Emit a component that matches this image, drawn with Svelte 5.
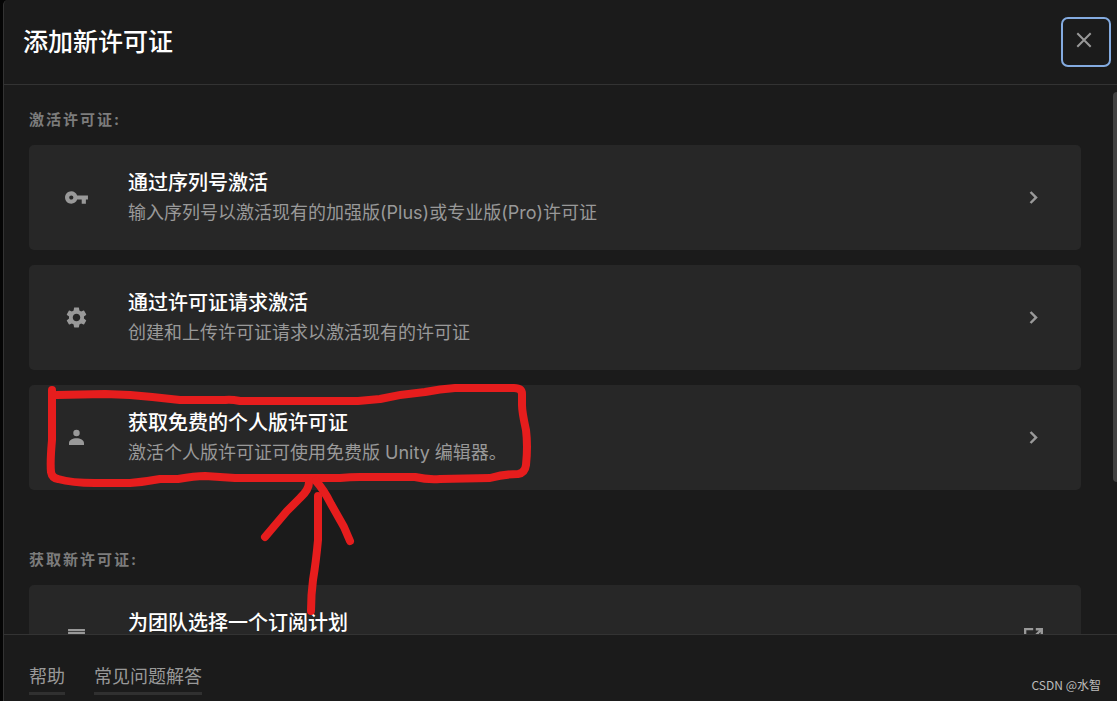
<script>
  const sections = [
    {
      id: "activate",
      label: "激活许可证:",
      items: [
        {icon: "key", title: "通过序列号激活", text: "输入序列号以激活现有的加强版(Plus)或专业版(Pro)许可证"},
        {icon: "gear", title: "通过许可证请求激活", text: "创建和上传许可证请求以激活现有的许可证"},
        {icon: "person", title: "获取免费的个人版许可证", text: "激活个人版许可证可使用免费版 Unity 编辑器。"}
      ]
    },
    {
      id: "get",
      label: "获取新许可证:",
      items: [
        {icon: "list", title: "为团队选择一个订阅计划", text: "", href: "#plans"}
      ]
    }
  ]

  const icons = {
    key: "M12.65 10C11.83 7.67 9.61 6 7 6c-3.31 0-6 2.69-6 6s2.69 6 6 6c2.61 0 4.83-1.67 5.65-4H17v4h4v-4h2v-4H12.65zM7 14c-1.1 0-2-.9-2-2s.9-2 2-2 2 .9 2 2-.9 2-2 2z",
    gear: "M19.14 12.94c.04-.3.06-.61.06-.94 0-.32-.02-.64-.07-.94l2.03-1.58c.18-.14.23-.41.12-.61l-1.92-3.32c-.12-.22-.37-.29-.59-.22l-2.39.96c-.5-.38-1.03-.7-1.62-.94l-.36-2.54c-.04-.24-.24-.41-.48-.41h-3.84c-.24 0-.43.17-.47.41l-.36 2.54c-.59.24-1.13.57-1.62.94l-2.39-.96c-.22-.08-.47 0-.59.22L2.74 8.87c-.12.21-.08.47.12.61l2.03 1.58c-.05.3-.09.63-.09.94s.02.64.07.94l-2.03 1.58c-.18.14-.23.41-.12.61l1.92 3.32c.12.22.37.29.59.22l2.39-.96c.5.38 1.03.7 1.62.94l.36 2.54c.05.24.24.41.48.41h3.84c.24 0 .44-.17.47-.41l.36-2.54c.59-.24 1.13-.56 1.62-.94l2.39.96c.22.08.47 0 .59-.22l1.92-3.32c.12-.22.07-.47-.12-.61l-2.01-1.58zM12 15.6c-1.98 0-3.6-1.62-3.6-3.6s1.62-3.6 3.6-3.6 3.6 1.62 3.6 3.6-1.62 3.6-3.6 3.6z",
    person: "M12 4.6a3.1 3.1 0 1 0 0 6.2 3.1 3.1 0 0 0 0-6.2zM4.8 19.2v-1.8c0-3 3.6-4.7 7.2-4.7s7.2 1.7 7.2 4.7v1.8z",
    list: "M3.9 3.8h16.2v2.1H3.9zM3.9 6.7h16.2v2.2H3.9zM3.9 10.5h16.2v9H3.9z",
    chevron: "M10 6L8.3 7.5 12.8 12l-4.5 4.5L10 18.1l6.1-6.1z",
    external: "M2.9 2.9h8.8v2.2H5.1v13.8h13.8v-6.4h2.2v8.6H2.9zM14.2 2.9h6.9v6.9h-2.3V6.8l-8.3 8.3-1.6-1.6 8.3-8.3h-3z"
  }
</script>

{#snippet icon(name)}
  <svg class="icon" viewBox="0 0 24 24" aria-hidden="true"><path d={icons[name]} /></svg>
{/snippet}

{#snippet row(item)}
  {@render icon(item.icon)}
  <span class="row-text">
    <span class="row-title">{item.title}</span>
    <span class="row-desc">{item.text}</span>
  </span>
  {@render icon(item.href ? "external" : "chevron")}
{/snippet}

<div class="backdrop">
  <div class="dialog" role="dialog" aria-labelledby="dialog-title">
    <header>
      <h1 id="dialog-title">添加新许可证</h1>
      <button class="close" aria-label="关闭">
        <svg viewBox="0 0 16 16" aria-hidden="true"><path d="M1.3 1.3l13.4 13.4M14.7 1.3L1.3 14.7" /></svg>
      </button>
    </header>

    <div class="body">
      <main>
        {#each sections as section (section.id)}
          <section>
            <h2>{section.label}</h2>
            <div class="rows">
              {#each section.items as item}
                {#if item.href}
                  <a class="row" href={item.href}>{@render row(item)}</a>
                {:else}
                  <button class="row">{@render row(item)}</button>
                {/if}
              {/each}
            </div>
          </section>
        {/each}
      </main>
      <div class="thumb"></div>
    </div>

    <footer>
      <a href="#help">帮助</a>
      <a href="#faq">常见问题解答</a>
    </footer>
  </div>

  <!-- hand drawn marker around the personal licence -->
  <svg class="marker" width="540" height="630" viewBox="0 0 540 630" aria-hidden="true">
    <path d="M52 390L52 440Q50 462 51 472Q52 478 58 479Q72 483 95 483L130 483Q144 482 160 479L178 479Q195 476 205 476Q220 477 235 478L340 478Q350 477 360 477L415 477Q428 480 440 479L490 478Q505 474 518 474Q525 473 526 465Q528 446 526 430Q522 412 522 405L522 394Q522 388 514 388L455 388Q440 389 425 392Q402 394 380 399L358 401L240 401Q230 399 225 400L180 400Q155 397 130 395L105 394L57 395" />
    <path d="M309 480Q310 489 300 498L287 511L265 537" />
    <path d="M316 481Q324 490 331 504L344 527L350 541" />
    <path d="M318 496L318 540Q316 562 313 580Q311 595 311 611" />
  </svg>
  <span class="watermark">CSDN @水智</span>
</div>

<style>
  :global(body) {
    margin: 0;
    background-color: #050505;
  }

  .backdrop {
    position: relative;
    height: 100vh;
    padding-left: 3px;
    box-sizing: border-box;
    overflow: hidden;
    background-color: #050505;
    color: #999;
    font-family: Inter, "Noto Sans CJK SC", sans-serif;
    font-size: 18px;
  }

  .dialog {
    display: flex;
    flex-direction: column;
    height: 100%;
    box-sizing: border-box;
    border-left: 1px solid #333;
    border-radius: 5px 0 0 0;
    background-color: #1b1b1b;
  }

  header {
    display: flex;
    align-items: center;
    justify-content: space-between;
    height: 84px;
    padding: 0 6px 0 19px;
    border-bottom: 1px solid #333;
  }

  h1 {
    margin: 0;
    color: white;
    font-size: 25px;
    line-height: 36px;
    font-weight: 500;
  }

  .close {
    width: 50px;
    height: 50px;
    padding: 0 4px 4px 0;
    border: 2px solid #84abe0;
    border-radius: 7px;
    background: none;
  }

  .close svg {
    display: block;
    width: 16px;
    height: 16px;
    margin: 0 auto;
    fill: none;
    stroke: #999;
    stroke-width: 2;
  }

  .body {
    position: relative;
    flex: 1;
    min-height: 0;
  }

  main {
    height: 100%;
    box-sizing: border-box;
    padding: 25px 36px 0 25px;
    overflow-y: auto;
    scrollbar-width: none;
  }

  .thumb {
    position: absolute;
    top: 7px;
    right: 0;
    width: 4px;
    height: 71%;
    border-radius: 4px 0 0 4px;
    background-color: #424242;
  }

  section {
    margin-bottom: 60px;
  }

  h2 {
    margin: 0 0 15px;
    color: #7c7c7c;
    font-size: 15px;
    line-height: 20px;
    font-weight: 700;
    letter-spacing: 2px;
  }

  .rows {
    display: flex;
    flex-direction: column;
    gap: 15px;
  }

  .row {
    display: flex;
    align-items: center;
    gap: 39px;
    min-height: 105px;
    box-sizing: border-box;
    padding: 0 35px;
    border: none;
    border-radius: 5px;
    background-color: #272727;
    color: #999;
    font: inherit;
    text-align: left;
    text-decoration: none;
  }

  .icon {
    flex: none;
    width: 25px;
    height: 25px;
    fill: #999;
  }

  .row-text {
    display: flex;
    flex: 1;
    flex-direction: column;
  }

  .row-title {
    color: white;
    font-size: 20px;
    line-height: 30px;
    font-weight: 500;
  }

  .row-desc {
    min-height: 30px;
    line-height: 30px;
  }

  footer {
    display: flex;
    gap: 29px;
    padding: 30px 25px 6px;
    border-top: 1px solid #333;
  }

  footer a {
    padding-bottom: 3px;
    border-bottom: 3px solid #303030;
    color: #999;
    line-height: 24px;
    text-decoration: none;
  }

  .marker {
    position: absolute;
    top: 0;
    left: 0;
    fill: none;
    stroke: #e61d1d;
    stroke-width: 8;
    stroke-linecap: round;
    stroke-linejoin: round;
    pointer-events: none;
  }

  .watermark {
    position: absolute;
    right: 16px;
    bottom: 7px;
    color: #bbb;
    font-family: "Noto Sans CJK SC", sans-serif;
    font-size: 12px;
    line-height: 18px;
  }
</style>
